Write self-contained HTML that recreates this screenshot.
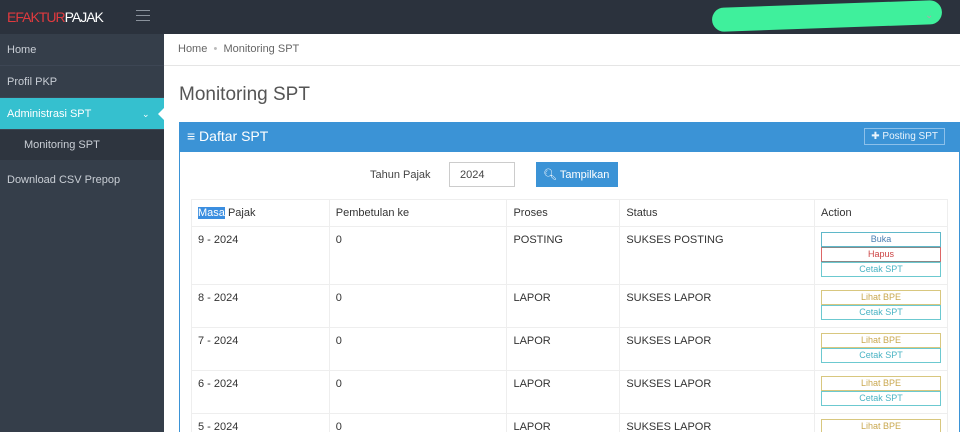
<!DOCTYPE html>
<html style="width:960px;height:432px;overflow:hidden"><head><style>
*{box-sizing:border-box;margin:0;padding:0}
body{width:960px;height:432px;overflow:hidden;font-family:"Liberation Sans",sans-serif;background:#fff;position:relative;font-size:11px;color:#333}
.top{position:absolute;left:0;top:0;width:960px;height:34px;background:#2b323d}
.logo{position:absolute;left:7px;top:9px;font-size:14px;letter-spacing:-1px;color:#fff}
.logo b{font-weight:normal;color:#e03a3e}
.ham{position:absolute;left:136px;top:10px;width:14px}
.ham i{display:block;height:1px;background:#8a929c;margin-bottom:4px}
.scrib{position:absolute;left:712px;top:4px;width:230px;height:24px;background:#3ff09c;border-radius:12px;transform:rotate(-2deg)}
.usr{position:absolute;left:925px;top:10px;color:#aaa;font-size:10px}
.side{position:absolute;left:0;top:34px;width:164px;height:398px;background:#353e4a}
.si{height:32px;line-height:32px;padding-left:7px;color:#c9ced5;font-size:11px;border-bottom:1px solid #3d4654}
.act{background:#35c0cf;color:#fff;position:relative}
.act:after{content:"";position:absolute;right:0;top:10px;border:6px solid transparent;border-right-color:#fff}
.sub{background:#2e353f;height:30px;line-height:30px;padding-left:24px;color:#c9ced5}
.bc{position:absolute;left:164px;top:34px;width:796px;height:32px;border-bottom:1px solid #e5e5e5;padding:9px 14px;color:#666;font-size:11px}
h1{position:absolute;left:179px;top:84px;font-weight:normal;font-size:19px;color:#555}
.panel{position:absolute;left:179px;top:122px;width:781px;height:310px;border:1px solid #3b93d6;border-bottom:0;overflow:hidden}
.ph{height:29px;background:#3b93d6;color:#fff;font-size:14px;padding:5px 7px}
.pb{position:absolute;right:14px;top:5px;border:1px solid #8cc0ea;font-size:10px;padding:2px 6px;color:#eaf4fc}
.lbl{position:absolute;left:190px;top:46px;color:#444}
.inp{position:absolute;left:269px;top:39px;width:66px;height:25px;border:1px solid #ccc;padding:6px 10px;color:#444}
.btn{position:absolute;left:356px;top:39px;width:82px;height:25px;background:#3b93d6;color:#fff;padding:6px 7px}
table{position:absolute;left:11px;top:76px;border-collapse:collapse;width:757px}
td,th{border:1px solid #eee;text-align:left;vertical-align:top;padding:7px 6px;font-weight:normal;color:#333}
th{height:27px}
.sel{background:#3b8ee0;color:#fff}
.a{display:block;width:120px;height:15px;text-align:center;font-size:9px;line-height:13px;border:1px solid}
.bl{border-color:#5fb8c9;color:#4a7eb2}
.hp{border-color:#d66;color:#c44;border-top-color:#888;border-bottom-color:#888}
.ct{border-color:#6cc9d0;color:#4bb4c4}
.lb{border-color:#d8c77f;color:#c9a850}
</style></head><body>
<div class="top"><div class="logo"><b>EFAKTUR</b>PAJAK</div><div class="ham"><i></i><i></i><i></i></div><div class="scrib"></div><div class="usr">⌄</div></div>
<div class="side">
<div class="si">Home</div><div class="si">Profil PKP</div><div class="si act">Administrasi SPT <span style="position:absolute;left:142px;font-size:9px">⌄</span></div>
<div class="sub">Monitoring SPT</div><div class="si" style="height:40px;line-height:40px;border:0">Download CSV Prepop</div></div>
<div class="bc">Home &nbsp;<span style="color:#bbb">•</span>&nbsp; Monitoring SPT</div>
<h1>Monitoring SPT</h1>
<div class="panel">
<div class="ph">≡ Daftar SPT<span class="pb">✚ Posting SPT</span></div>
<div class="lbl">Tahun Pajak</div><div class="inp">2024</div><div class="btn">🔍︎ Tampilkan</div>
<table>
<tr><th style="width:138px"><span class="sel">Masa</span> Pajak</th><th style="width:178px">Pembetulan ke</th><th style="width:113px">Proses</th><th style="width:195px">Status</th><th>Action</th></tr>
<tr style="height:58px"><td>9 - 2024</td><td>0</td><td>POSTING</td><td>SUKSES POSTING</td><td style="padding-top:5px"><span class="a bl">Buka</span><span class="a hp">Hapus</span><span class="a ct">Cetak SPT</span></td></tr>
<tr style="height:43px"><td>8 - 2024</td><td>0</td><td>LAPOR</td><td>SUKSES LAPOR</td><td style="padding-top:5px"><span class="a lb">Lihat BPE</span><span class="a ct">Cetak SPT</span></td></tr>
<tr style="height:43px"><td>7 - 2024</td><td>0</td><td>LAPOR</td><td>SUKSES LAPOR</td><td style="padding-top:5px"><span class="a lb">Lihat BPE</span><span class="a ct">Cetak SPT</span></td></tr>
<tr style="height:43px"><td>6 - 2024</td><td>0</td><td>LAPOR</td><td>SUKSES LAPOR</td><td style="padding-top:5px"><span class="a lb">Lihat BPE</span><span class="a ct">Cetak SPT</span></td></tr>
<tr style="height:43px"><td>5 - 2024</td><td>0</td><td>LAPOR</td><td>SUKSES LAPOR</td><td style="padding-top:5px"><span class="a lb">Lihat BPE</span><span class="a ct">Cetak SPT</span></td></tr>
</table></div>
</body></html>
